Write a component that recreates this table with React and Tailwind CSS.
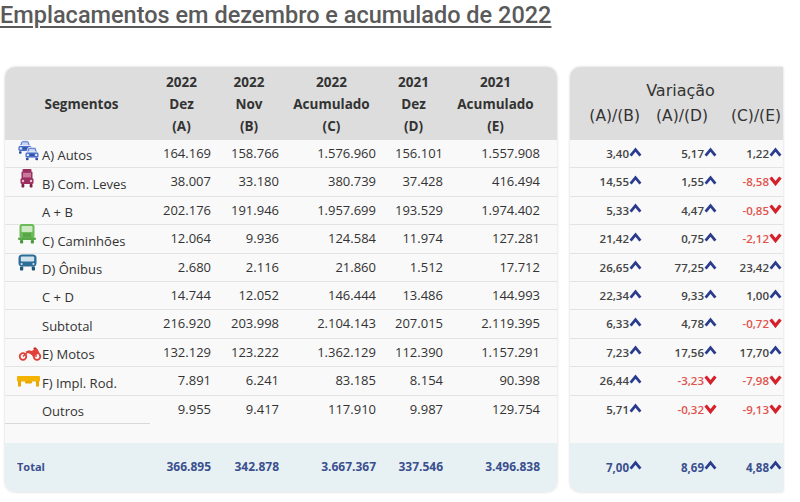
import React from 'react';

const rows = [
  { icon: 'car', label: 'A) Autos', v: ['164.169', '158.766', '1.576.960', '156.101', '1.557.908'], p: ['3,40', '5,17', '1,22'] },
  { icon: 'van', label: 'B) Com. Leves', v: ['38.007', '33.180', '380.739', '37.428', '416.494'], p: ['14,55', '1,55', '-8,58'] },
  { label: 'A + B', v: ['202.176', '191.946', '1.957.699', '193.529', '1.974.402'], p: ['5,33', '4,47', '-0,85'] },
  { icon: 'truck', label: 'C) Caminhões', v: ['12.064', '9.936', '124.584', '11.974', '127.281'], p: ['21,42', '0,75', '-2,12'] },
  { icon: 'bus', label: 'D) Ônibus', v: ['2.680', '2.116', '21.860', '1.512', '17.712'], p: ['26,65', '77,25', '23,42'] },
  { label: 'C + D', v: ['14.744', '12.052', '146.444', '13.486', '144.993'], p: ['22,34', '9,33', '1,00'] },
  { label: 'Subtotal', v: ['216.920', '203.998', '2.104.143', '207.015', '2.119.395'], p: ['6,33', '4,78', '-0,72'] },
  { icon: 'moto', label: 'E) Motos', v: ['132.129', '123.222', '1.362.129', '112.390', '1.157.291'], p: ['7,23', '17,56', '17,70'] },
  { icon: 'trailer', label: 'F) Impl. Rod.', v: ['7.891', '6.241', '83.185', '8.154', '90.398'], p: ['26,44', '-3,23', '-7,98'] },
  { label: 'Outros', v: ['9.955', '9.417', '117.910', '9.987', '129.754'], p: ['5,71', '-0,32', '-9,13'] },
];

const totals = ['366.895', '342.878', '3.667.367', '337.546', '3.496.838'];
const totalPct = ['7,00', '8,69', '4,88'];

const colW = ['w-[67px]', 'w-[68px]', 'w-[97px]', 'w-[67px]', 'w-[97px]'];
const pctW = ['w-[73px]', 'w-[75px]', 'w-[65px]'];

const headers = [
  ['2022', 'Dez', '(A)'],
  ['2022', 'Nov', '(B)'],
  ['2022', 'Acumulado', '(C)'],
  ['2021', 'Dez', '(D)'],
  ['2021', 'Acumulado', '(E)'],
];

const Up = () => (
  <svg width="13" height="10" viewBox="0 0 13 10" className="-mt-[4px]">
    <polyline points="1.6,8.6 6.5,2.6 11.4,8.6" fill="none" stroke="#2b3c8e" strokeWidth="2.8" strokeLinejoin="miter" />
  </svg>
);

const Down = () => (
  <svg width="13" height="10" viewBox="0 0 13 10" className="-mt-[2px]">
    <polyline points="1.6,1.6 6.5,7.6 11.4,1.6" fill="none" stroke="#d6202a" strokeWidth="3.2" strokeLinejoin="miter" />
  </svg>
);

const Car = ({ x, y }) => (
  <g transform={`translate(${x} ${y})`}>
    <path d="M2.5 6 L4 2 Q4.6 0.8 6 0.8 H10 Q11.4 0.8 12 2 L13.5 6 Z" fill="#4b6fc8" stroke="#fff" strokeWidth="0.8" />
    <path d="M4.3 5.4 L5.3 2.3 H10.7 L11.7 5.4 Z" fill="#c8d5f3" />
    <rect x="1" y="5.5" width="14" height="6" rx="2" fill="#4b6fc8" stroke="#fff" strokeWidth="0.8" />
    <circle cx="3.8" cy="8.4" r="1.2" fill="#e2e9fb" />
    <circle cx="12.2" cy="8.4" r="1.2" fill="#e2e9fb" />
    <rect x="6" y="7.6" width="4" height="1.6" rx="0.5" fill="#2f4ea0" />
    <rect x="2" y="11.2" width="2.6" height="2.6" rx="0.8" fill="#2f4ea0" />
    <rect x="11.4" y="11.2" width="2.6" height="2.6" rx="0.8" fill="#2f4ea0" />
  </g>
);

const Icon = ({ type }) => {
  if (type === 'car')
    return (
      <svg width="23" height="21" viewBox="0 0 23 21" className="-mt-[6px]">
        <Car x={0} y={0} />
        <Car x={7} y={6.5} />
      </svg>
    );
  if (type === 'van')
    return (
      <svg width="14" height="19" viewBox="0 0 14 19" className="ml-[3px] -mt-[8px]">
        <rect x="2.5" y="0" width="9" height="3" rx="1" fill="#9a2f60" />
        <rect x="1.5" y="2.5" width="11" height="7" rx="1" fill="#9a2f60" />
        <rect x="3" y="3.8" width="8" height="4.6" fill="#c77a9c" />
        <rect x="0.5" y="9" width="13" height="6" rx="1.5" fill="#9a2f60" />
        <circle cx="3" cy="12" r="1.2" fill="#e7bfd0" />
        <circle cx="11" cy="12" r="1.2" fill="#e7bfd0" />
        <rect x="1.5" y="15" width="2.8" height="3.5" rx="0.8" fill="#7a1f48" />
        <rect x="9.7" y="15" width="2.8" height="3.5" rx="0.8" fill="#7a1f48" />
      </svg>
    );
  if (type === 'truck')
    return (
      <svg width="18" height="20" viewBox="0 0 18 20" className="ml-[1px] -mt-[10px]">
        <rect x="1.5" y="0" width="15" height="14" rx="2.5" fill="#6bbb58" />
        <rect x="3.5" y="2" width="11" height="6" rx="1" fill="#cdeac4" />
        <rect x="5" y="9.5" width="8" height="1.2" fill="#4f9a40" />
        <rect x="5" y="11.4" width="8" height="1.2" fill="#4f9a40" />
        <rect x="0" y="13.5" width="18" height="2.5" rx="1" fill="#5aa848" />
        <rect x="2" y="16" width="3.2" height="3.6" rx="0.8" fill="#4f9a40" />
        <rect x="12.8" y="16" width="3.2" height="3.6" rx="0.8" fill="#4f9a40" />
      </svg>
    );
  if (type === 'bus')
    return (
      <svg width="19" height="17" viewBox="0 0 19 17" className="ml-[1px] -mt-[9px]">
        <rect x="0.5" y="0.5" width="18" height="12" rx="3.5" fill="#2d6c96" />
        <rect x="2.8" y="2.6" width="13.4" height="5" rx="1" fill="#d2e3ee" />
        <circle cx="3.6" cy="10" r="1.1" fill="#d2e3ee" />
        <circle cx="15.4" cy="10" r="1.1" fill="#d2e3ee" />
        <rect x="2" y="12.5" width="3.2" height="4" rx="0.8" fill="#1f5478" />
        <rect x="13.8" y="12.5" width="3.2" height="4" rx="0.8" fill="#1f5478" />
      </svg>
    );
  if (type === 'moto')
    return (
      <svg width="24" height="14" viewBox="0 0 24 14" className="ml-[1px] mt-[3px]">
        <circle cx="5" cy="9.5" r="3.3" fill="none" stroke="#e0413b" strokeWidth="1.8" />
        <circle cx="19" cy="9.5" r="3.3" fill="none" stroke="#e0413b" strokeWidth="1.8" />
        <path d="M5 9.5 L9 5.5 H13 L15.5 9 H19" fill="none" stroke="#e0413b" strokeWidth="1.6" />
        <path d="M7.5 4.5 L11 3.2 L14 4 L17 1.2 L19.5 2 L21.5 6 L18 8 L14.5 8.5 L11.5 6.5 Z" fill="#e0413b" />
        <rect x="15.5" y="0.5" width="3" height="1.5" rx="0.6" fill="#b52a25" />
      </svg>
    );
  if (type === 'trailer')
    return (
      <svg width="23" height="11" viewBox="0 0 23 11" className="mt-[1px]">
        <rect x="0" y="0" width="23" height="5.5" rx="1" fill="#f3b300" />
        <rect x="1" y="5" width="3" height="5.5" fill="#e8a800" />
        <rect x="19" y="5" width="3" height="5.5" fill="#e8a800" />
        <rect x="8" y="5" width="7" height="2.5" rx="1" fill="#e8a800" />
      </svg>
    );
  return null;
};

const num = "text-right pr-[4px] text-[13px] font-medium text-[#333]";

export default function App() {
  return (
    <div className="w-[800px] h-[502px] bg-white overflow-hidden" style={{ fontFamily: '"Open Sans", "DejaVu Sans", sans-serif' }}>
      <h1
        className="text-[23.5px] leading-[28px] font-medium text-[#5a5a5a] underline underline-offset-[3px] decoration-[1.5px] pt-[1px]"
        style={{ fontFamily: 'Roboto, "Liberation Sans", sans-serif' }}
      >
        Emplacamentos em dezembro e acumulado de 2022
      </h1>

      <div className="flex items-start gap-[13px] mt-[38px] pl-[5px]">
        {/* tabela principal */}
        <div className="w-[552px] rounded-[10px] overflow-hidden bg-[#f9f9f9] shadow-[0_0_3px_rgba(0,0,0,0.18)]">
          <div className="flex h-[73px] bg-[#dddddd] items-center text-[13.5px] font-bold text-[#333] leading-[22px]">
            <div className="w-[143px] text-center pl-[10px]">Segmentos</div>
            {headers.map((h, i) => (
              <div key={i} className={`${colW[i]} text-center flex flex-col`}>
                {h.map((t) => (
                  <span key={t}>{t}</span>
                ))}
              </div>
            ))}
          </div>

          {rows.map((r, i) => {
            const last = i === rows.length - 1;
            return (
              <div key={r.label} className={`flex h-[28.4px] items-center ${last ? '' : 'border-b border-[#e3e3e3]'}`}>
                <div className={`w-[145px] h-full flex items-center pl-[12px] ${last ? 'border-b border-[#d9d9d9]' : ''}`}>
                  <div className="w-[25px] flex">{r.icon && <Icon type={r.icon} />}</div>
                  <span className="text-[13px] font-medium text-[#333] pt-[5px]">{r.label}</span>
                </div>
                {r.v.map((v, j) => (
                  <div key={j} className={`${j === 0 ? 'w-[65px]' : colW[j]} ${num}`}>
                    {v}
                  </div>
                ))}
              </div>
            );
          })}

          <div className="h-[19px]" />

          <div className="flex h-[49px] items-center bg-[#e7f1f4] font-bold text-[#3b4f8e]">
            <div className="w-[143px] pl-[12px] text-[11px]">Total</div>
            {totals.map((v, j) => (
              <div key={j} className={`${colW[j]} text-right pr-[4px] text-[12px]`}>
                {v}
              </div>
            ))}
          </div>
        </div>

        {/* variação */}
        <div className="w-[213px] rounded-l-[10px] overflow-hidden bg-[#f9f9f9] shadow-[0_0_3px_rgba(0,0,0,0.18)]">
          <div
            className="h-[73px] bg-[#dddddd] text-[#333] flex flex-col justify-center"
            style={{ fontFamily: '"DejaVu Sans", sans-serif' }}
          >
            <div className="text-center text-[16px] leading-[24px] pl-[8px]">Variação</div>
            <div className="flex text-[15.5px] leading-[26px]">
              <div className="w-[73px] text-right pr-[3px]">(A)/(B)</div>
              <div className="w-[75px] text-right pr-[10px]">(A)/(D)</div>
              <div className="w-[65px] text-right pr-[2px]">(C)/(E)</div>
            </div>
          </div>

          {rows.map((r, i) => (
            <div key={r.label} className={`flex h-[28.4px] items-center ${i === rows.length - 1 ? '' : 'border-b border-[#e3e3e3]'}`}>
              {r.p.map((p, j) => {
                const neg = p.startsWith('-');
                return (
                  <div key={j} className={`${pctW[j]} flex justify-end items-center pr-[1px] text-[11.5px] font-semibold ${neg ? 'text-[#e0534d]' : 'text-[#444]'}`}>
                    <span>{p}</span>
                    {neg ? <Down /> : <Up />}
                  </div>
                );
              })}
            </div>
          ))}

          <div className="h-[19px]" />

          <div className="flex h-[49px] items-center bg-[#e7f1f4]">
            {totalPct.map((p, j) => (
              <div key={j} className={`${pctW[j]} flex justify-end items-center pr-[1px] text-[11.5px] font-bold text-[#3b4f8e]`}>
                <span>{p}</span>
                <Up />
              </div>
            ))}
          </div>
        </div>
      </div>
    </div>
  );
}
